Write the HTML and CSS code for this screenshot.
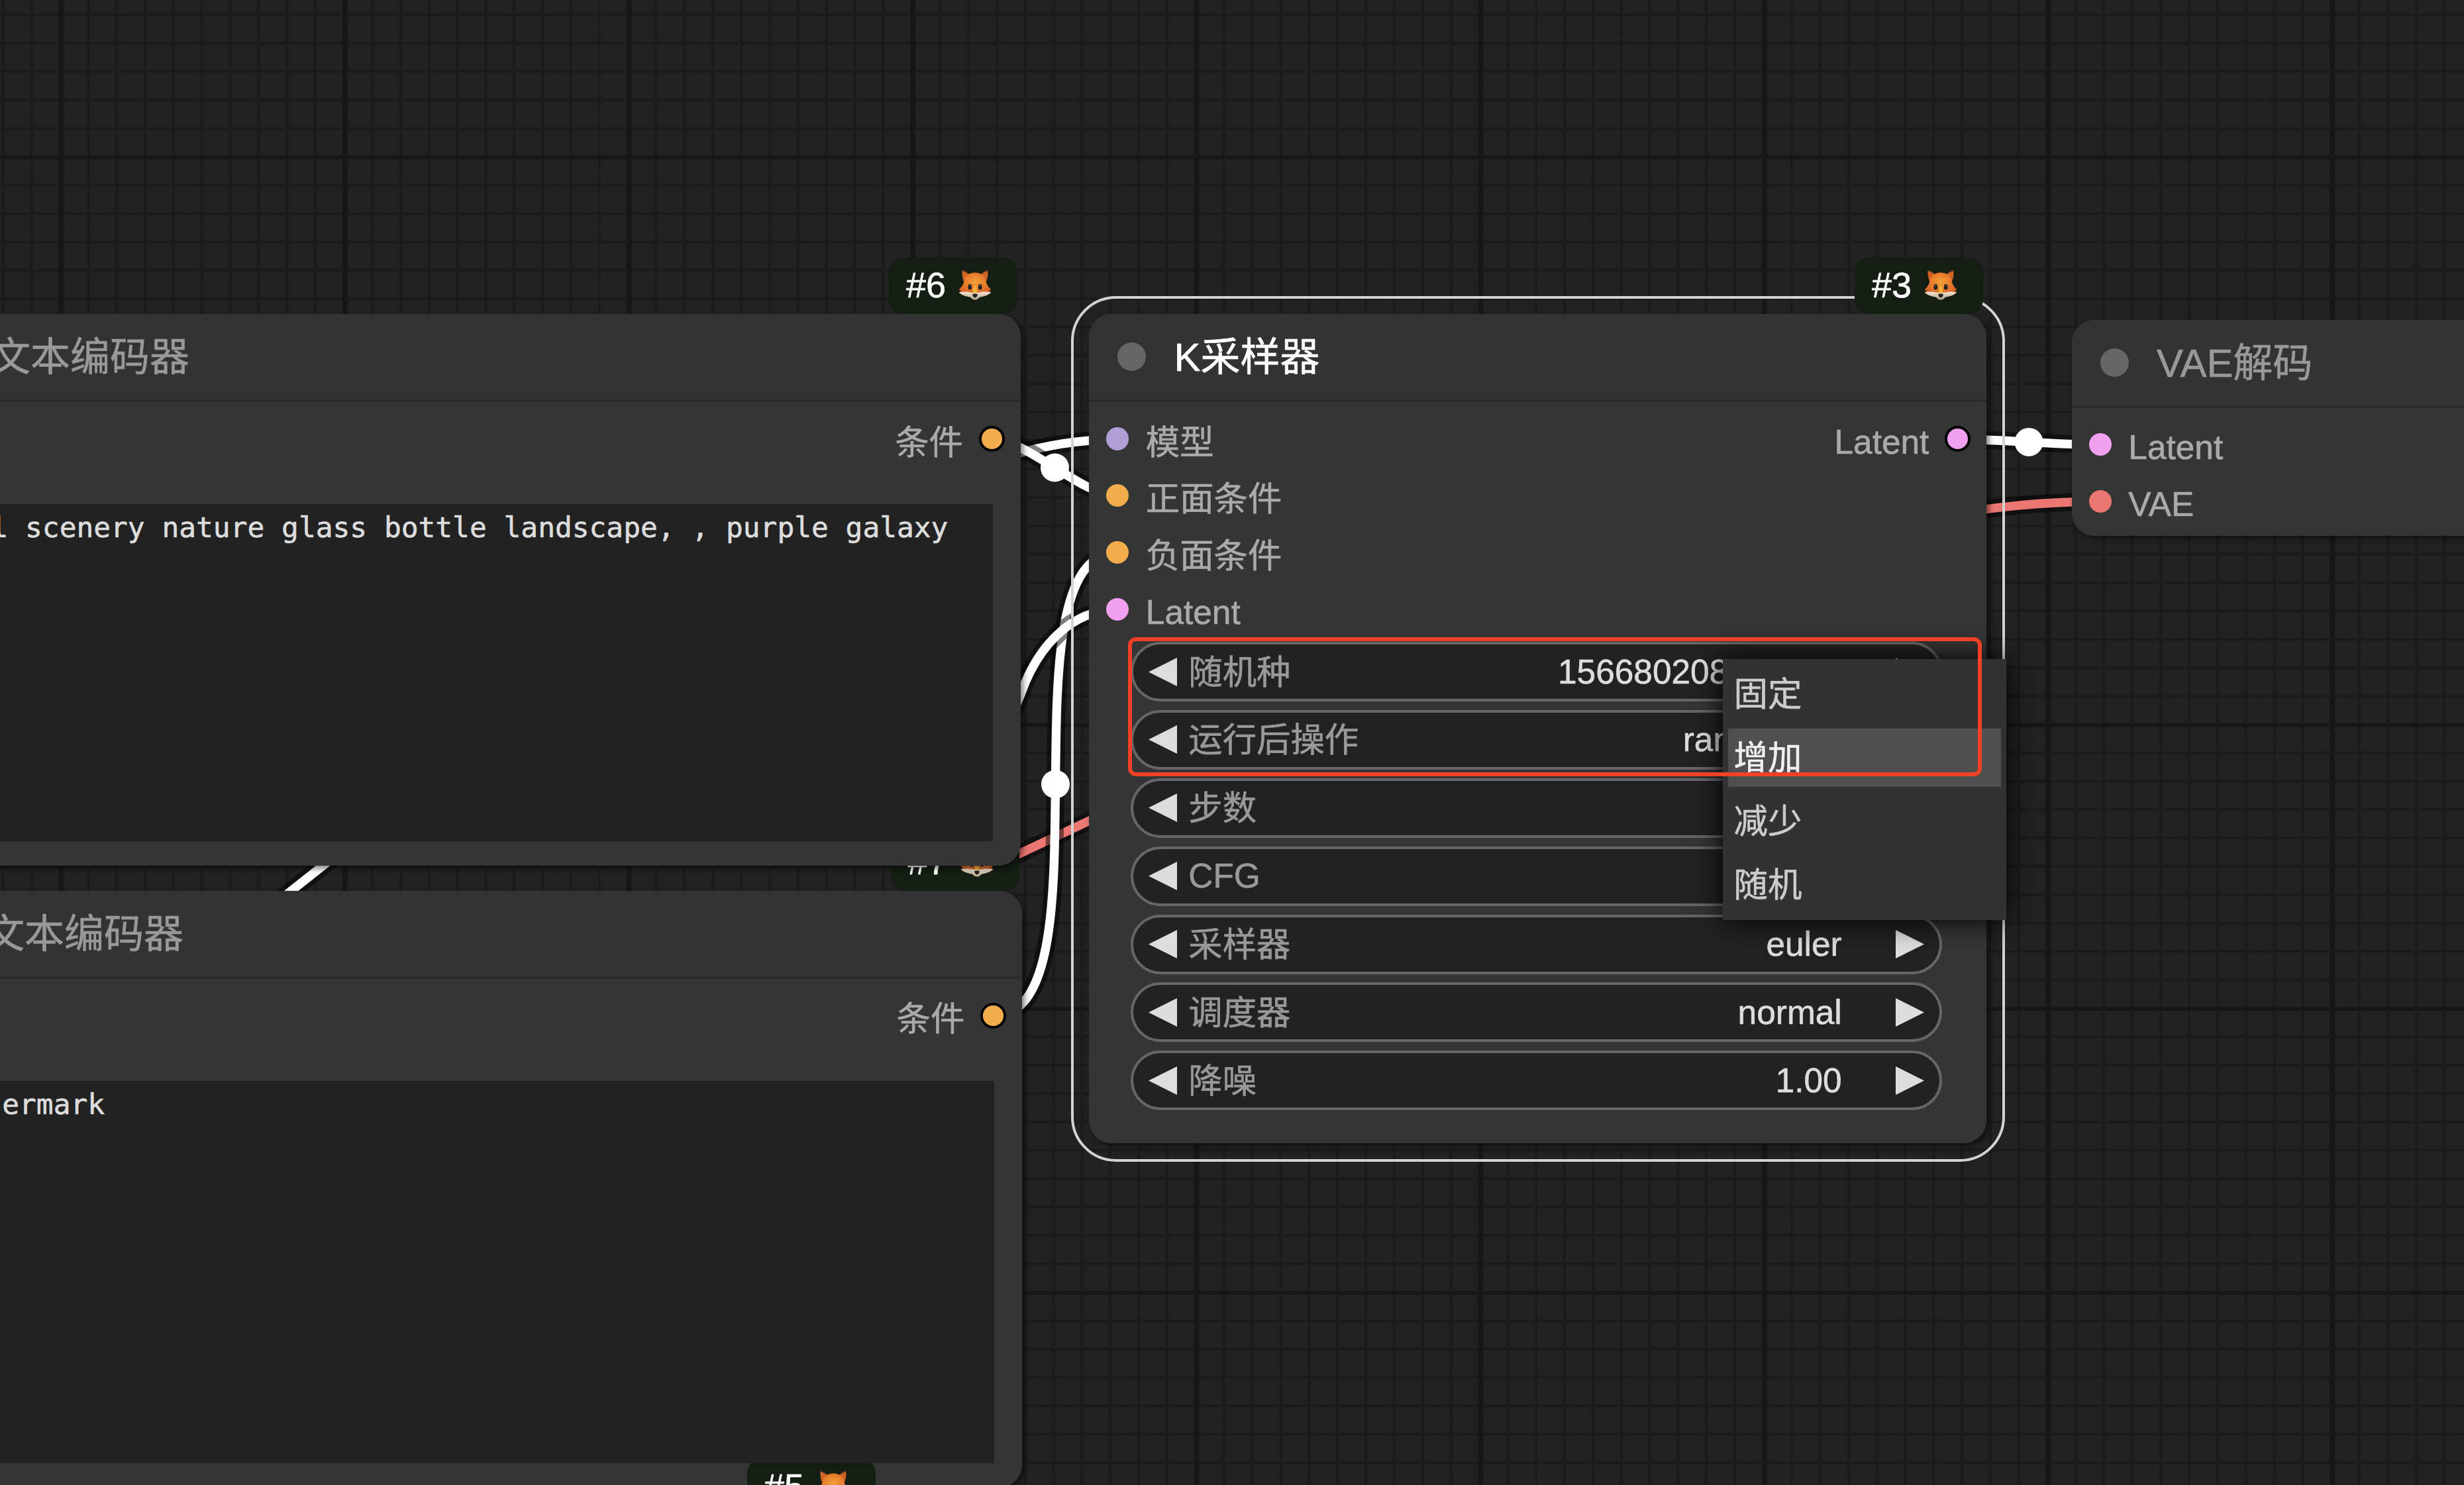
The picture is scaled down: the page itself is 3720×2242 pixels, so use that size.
FILE: index.html
```html
<!DOCTYPE html>
<html lang="zh-CN">
<head>
<meta charset="utf-8">
<title>ComfyUI</title>
<link rel="stylesheet" href="styles.css">
</head>
<body>
<svg class="defs" width="0" height="0" aria-hidden="true">
  <defs>
    <radialGradient id="fur" cx="50%" cy="38%" r="60%">
      <stop offset="0" stop-color="#f3a03a"/>
      <stop offset="0.55" stop-color="#e67a2b"/>
      <stop offset="1" stop-color="#cf5a20"/>
    </radialGradient>
    <linearGradient id="muzzle" x1="0" y1="0" x2="0" y2="1">
      <stop offset="0" stop-color="#efe3d2"/>
      <stop offset="1" stop-color="#b9a58d"/>
    </linearGradient>
    <symbol id="fox" viewBox="0 0 50 47">
      <path d="M5 .5C9 1.5 14 4 17.500 8L9 22C5.500 16 4.500 8 5 .5Z" fill="#3c2a1a"/>
      <path d="M45 .5C41 1.500 36 4 32.500 8L41 22C44.500 16 45.500 8 45 .5Z" fill="#3c2a1a"/>
      <path d="M5.800 3C10 4 14 6.500 17 9L9 20C6 15 5.300 9 5.800 3Z" fill="#cf6326"/>
      <path d="M44.200 3C40 4 36 6.500 33 9L41 20C44 15 44.700 9 44.200 3Z" fill="#cf6326"/>
      <path d="M25 5.500C33 5.500 39.500 9.500 41.500 18C42.500 23.500 45 27 49 31C48 32.500 47 33 46 33.300L49.300 35.500C43 41 35 40 25 43C15 40 7 41 .7 35.500L4 33.300C3 33 2 32.500 1 31C5 27 7.500 23.500 8.500 18C10.500 9.500 17 5.500 25 5.500Z" fill="url(#fur)"/>
      <path d="M.7 35.500C7 34 16 34.500 20.500 36C22 35 23 34.500 25 34.500C27 34.500 28 35 29.500 36C34 34.500 43 34 49.300 35.500C44 41 36 41.500 31.500 43C29 46.300 27 46.500 25 46.500C23 46.500 21 46.300 18.500 43C14 41.500 6 41 .7 35.500Z" fill="url(#muzzle)"/>
      <path d="M25 24C27 28 28 32 28.500 36.500H21.500C22 32 23 28 25 24Z" fill="#f5b641"/>
      <ellipse cx="17.300" cy="27.300" rx="2.800" ry="4.300" fill="#1c1b1e"/>
      <ellipse cx="32.700" cy="27.300" rx="2.800" ry="4.300" fill="#1c1b1e"/>
      <circle cx="17.300" cy="25.500" r="1" fill="#6d7684"/>
      <circle cx="32.700" cy="25.500" r="1" fill="#6d7684"/>
      <path d="M21 38.500C22 37 28 37 29 38.500C28.500 41 27 43.500 25 43.500C23 43.500 21.500 41 21 38.500Z" fill="#242222"/>
    </symbol>
    <symbol id="left" viewBox="0 0 43 43"><path d="M0 21.500 43 0V43Z" fill="#ddd"/></symbol>
    <symbol id="right" viewBox="0 0 43 43"><path d="M43 21.500 0 0V43Z" fill="#ddd"/></symbol>
  </defs>
</svg>

<main class="canvas">
  <svg class="graph" viewBox="0 0 3720 2242" aria-hidden="true">
    <defs>
      <pattern id="minor" x="88.400" y="234.500" width="42.860" height="42.860" patternUnits="userSpaceOnUse">
        <path d="M0 0H42.860V4.200H4.200V42.860H0Z" fill="#1b1b1b"/>
      </pattern>
      <pattern id="major" x="88.200" y="234.500" width="428.600" height="428.600" patternUnits="userSpaceOnUse">
        <path d="M0 0H428.600V6H8.200V428.600H0Z" fill="#171717"/>
      </pattern>
    </defs>
    <rect width="3720" height="2242" fill="#222"/>
    <rect width="3720" height="2242" fill="url(#minor)"/>
    <rect width="3720" height="2242" fill="url(#major)"/>
    <g class="link red">
      <path class="edge" d="M1480 1316.700 1700 1213"/><path class="wire" d="M1480 1316.700 1700 1213"/>
      <path class="edge" d="M2950 776Q3060 757.300 3170 757.300"/><path class="wire" d="M2950 776Q3060 757.300 3170 757.300"/>
    </g>
    <g class="link">
      <path class="edge" d="M398 1378 538 1267"/><path class="wire" d="M398 1378 538 1267"/>
      <path class="edge" d="M1480 703.700Q1583.500 663.500 1687 663.500"/><path class="wire" d="M1480 703.700Q1583.500 663.500 1687 663.500"/>
      <path class="edge" d="M1497.800 663C1549.800 663 1635 749 1687 749"/><path class="wire" d="M1497.800 663C1549.800 663 1635 749 1687 749"/>
      <circle cx="1592.500" cy="706" r="21.500"/>
      <path class="edge" d="M1500 1533.500C1681 1533.500 1506 834.700 1687 834.700"/><path class="wire" d="M1500 1533.500C1681 1533.500 1506 834.700 1687 834.700"/>
      <circle cx="1593.500" cy="1184" r="21.500"/>
      <path class="edge" d="M1529 1077 1541 1048C1566 977 1616 921 1687 920.300"/><path class="wire" d="M1529 1077 1541 1048C1566 977 1616 921 1687 920.300"/>
      <path class="edge" d="M2955.700 663C3009.400 663 3116.700 671.700 3170.400 671.700"/><path class="wire" d="M2955.700 663C3009.400 663 3116.700 671.700 3170.400 671.700"/>
      <circle cx="3063" cy="667.400" r="21.500"/>
    </g>
  </svg>

  <section class="node negative">
    <header class="title"><span class="dot"></span><span class="name">CLIP文本编码器</span></header>
    <div class="body">
      <div class="slot out"><span class="cjk">条件</span><i class="pin linked cond"></i></div>
      <div class="badge b5"><span>#5</span><svg class="fox"><use href="#fox"/></svg></div>
      <div class="prompt">text, watermark</div>
    </div>
  </section>
  <div class="badge b7"><span>#7</span><svg class="fox"><use href="#fox"/></svg></div>

  <section class="node positive">
    <header class="title"><span class="dot"></span><span class="name">CLIP文本编码器</span></header>
    <div class="body">
      <div class="slot out"><span class="cjk">条件</span><i class="pin linked cond"></i></div>
      <div class="prompt">beautiful scenery nature glass bottle landscape, , purple galaxy</div>
    </div>
  </section>
  <div class="badge b6"><span>#6</span><svg class="fox"><use href="#fox"/></svg></div>

  <section class="node vae">
    <header class="title"><span class="dot"></span><span class="name">VAE解码</span></header>
    <div class="body">
      <div class="slot"><i class="pin latent"></i><span>Latent</span></div>
      <div class="slot"><i class="pin model-vae"></i><span>VAE</span></div>
    </div>
  </section>

  <div class="selection"></div>
  <section class="node sampler">
    <header class="title"><span class="dot"></span><span class="name">K采样器</span></header>
    <div class="body">
      <div class="slots">
        <div>
          <div class="slot"><i class="pin model"></i><span class="cjk">模型</span></div>
          <div class="slot"><i class="pin cond"></i><span class="cjk">正面条件</span></div>
          <div class="slot"><i class="pin cond"></i><span class="cjk">负面条件</span></div>
          <div class="slot"><i class="pin latent"></i><span>Latent</span></div>
        </div>
        <div class="slot out"><span>Latent</span><i class="pin linked latent"></i></div>
      </div>
      <div class="widgets">
        <div class="widget"><svg class="arrow"><use href="#left"/></svg><span class="label cjk">随机种</span><span class="value">156680208700000</span><svg class="arrow"><use href="#right"/></svg></div>
        <div class="widget"><svg class="arrow"><use href="#left"/></svg><span class="label cjk">运行后操作</span><span class="value">randomize</span><svg class="arrow"><use href="#right"/></svg></div>
        <div class="widget"><svg class="arrow"><use href="#left"/></svg><span class="label cjk">步数</span><span class="value">20</span><svg class="arrow"><use href="#right"/></svg></div>
        <div class="widget"><svg class="arrow"><use href="#left"/></svg><span class="label">CFG</span><span class="value">8.0</span><svg class="arrow"><use href="#right"/></svg></div>
        <div class="widget"><svg class="arrow"><use href="#left"/></svg><span class="label cjk">采样器</span><span class="value">euler</span><svg class="arrow"><use href="#right"/></svg></div>
        <div class="widget"><svg class="arrow"><use href="#left"/></svg><span class="label cjk">调度器</span><span class="value">normal</span><svg class="arrow"><use href="#right"/></svg></div>
        <div class="widget"><svg class="arrow"><use href="#left"/></svg><span class="label cjk">降噪</span><span class="value">1.00</span><svg class="arrow"><use href="#right"/></svg></div>
      </div>
    </div>
  </section>
  <div class="badge b3"><span>#3</span><svg class="fox"><use href="#fox"/></svg></div>

  <div class="menu">
    <div class="item">固定</div>
    <div class="item active">增加</div>
    <div class="item">减少</div>
    <div class="item">随机</div>
  </div>
  <div class="callout"></div>
</main>
</body>
</html>
```
FILE: styles.css
```css
* { box-sizing: border-box; }

body {
  margin: 0;
  background: #222;
  font-family: "Liberation Sans", "Noto Sans CJK SC", sans-serif;
  -webkit-text-stroke: 0.6px currentColor;
}

.defs { position: absolute; }

.canvas {
  position: relative;
  width: 3720px;
  height: 2242px;
  overflow: hidden;
}

.graph {
  display: block;
  width: 3720px;
  height: 2242px;
}

/* Links */
.link { fill: #fff; stroke: #fff; }
.link.red { fill: #ec7672; stroke: #ec7672; }
.link path { fill: none; }
.link circle { stroke: none; }
.link .edge { stroke: rgba(0, 0, 0, 0.5); stroke-width: 27; }
.link .wire { stroke-width: 13.4; }

/* Nodes */
.node {
  position: absolute;
  border-radius: 34px;
  background: #353535;
  box-shadow: 4px 4px 9px rgba(0, 0, 0, 0.5);
}
.positive { left: -276px; top: 474.4px; width: 1816.6px; height: 832.6px; }
.negative { left: -285px; top: 1345px; width: 1828px; height: 901px; }
.sampler { left: 1644px; top: 474.4px; width: 1355px; height: 1251.6px; }
.vae { left: 3127.5px; top: 483px; width: 900px; height: 325.7px; }

.title {
  display: flex;
  align-items: center;
  gap: 42.5px;
  height: 128.6px;
  padding-left: 43px;
  border-radius: 34px 34px 0 0;
  background: #333;
  color: #999;
  font-size: 60px;
  line-height: 124px;
  white-space: nowrap;
}
.name { padding-top: 3px; }
.sampler .title { color: #fff; }

.dot {
  width: 43px;
  height: 43px;
  border-radius: 50%;
  background: #666;
}

.body {
  padding-top: 12.8px;
  border-top: 4.3px solid #2b2b2b;
}

.slots { display: flex; justify-content: space-between; }

.slot {
  display: flex;
  align-items: center;
  gap: 25.5px;
  height: 85.7px;
  padding: 0 26px;
  color: #aaa;
  font-size: 51.4px;
  line-height: 74px;
}
.slot span { padding-top: 8px; }
.slot .cjk { padding-top: 10px; }
.out { justify-content: flex-end; padding-right: 24px; gap: 24px; }

.pin {
  width: 34.3px;
  height: 34.3px;
  border-radius: 50%;
}
.pin.linked { width: 38.6px; height: 38.6px; border: 4.3px solid #000; }
.cond { background: #f3ad4d; }
.latent { background: #f19ff1; }
.model { background: #b09fd7; }
.model-vae { background: #ec7672; }

.prompt {
  position: relative;
  height: 509px;
  margin: 56px 41.6px 0 47px;
  padding: 9.5px 9px;
  overflow: hidden;
  background: #222;
  color: #ddd;
  font: 42.86px/50px "DejaVu Sans Mono", monospace;
  white-space: nowrap;
}
.negative .prompt { height: 577px; }

/* Widgets */
.widgets {
  display: flex;
  flex-direction: column;
  gap: 12.86px;
  margin: 6.6px 67px 0 62.5px;
}
.widget {
  display: flex;
  align-items: center;
  height: 90px;
  padding: 0 23.3px;
  border: 4.3px solid #666;
  border-radius: 45px;
  background: #222;
  font-size: 51.4px;
  line-height: 79px;
}
.arrow { width: 43px; height: 43px; }
.label { margin-left: 17.5px; color: #999; }
.value { margin: 0 81px 0 auto; color: #ddd; }
.widget .cjk { padding-top: 2px; }

.selection {
  position: absolute;
  left: 1616.5px;
  top: 446.5px;
  width: 1410.3px;
  height: 1307.5px;
  border: 4.3px solid #d3d3d3;
  border-radius: 68px;
}

/* Id badges */
.badge {
  position: absolute;
  display: flex;
  align-items: center;
  justify-content: space-between;
  width: 194px;
  height: 85.5px;
  padding: 0 39px 0 26px;
  border-radius: 22px;
  background: #141e13;
  color: #fff;
  font-size: 54px;
  line-height: 85px;
}
.badge span { padding-bottom: 1px; }
.fox { width: 50px; height: 47px; margin-bottom: 4px; }
.b6 { left: 1342px; top: 388.7px; }
.b3 { left: 2800px; top: 388.7px; }
.b7 { left: 1344.5px; top: 1259.5px; }
.b5 { left: 1413px; top: 857px; }

/* Combo drop-down */
.menu {
  position: absolute;
  left: 2600.5px;
  top: 995px;
  width: 428.5px;
  height: 394px;
  display: flex;
  flex-direction: column;
  gap: 8px;
  padding: 9px 8px;
  background: #323232;
  box-shadow: 0 0 40px #000;
}
.item {
  height: 88px;
  padding-left: 9px;
  color: #ccc;
  font-size: 51.4px;
  line-height: 89px;
}
.active { background: #4f4f4f; color: #f0f0f0; }

.callout {
  position: absolute;
  left: 1703px;
  top: 962.3px;
  width: 1289px;
  height: 210px;
  border: 6px solid #ee4126;
  border-radius: 12px;
}
```
